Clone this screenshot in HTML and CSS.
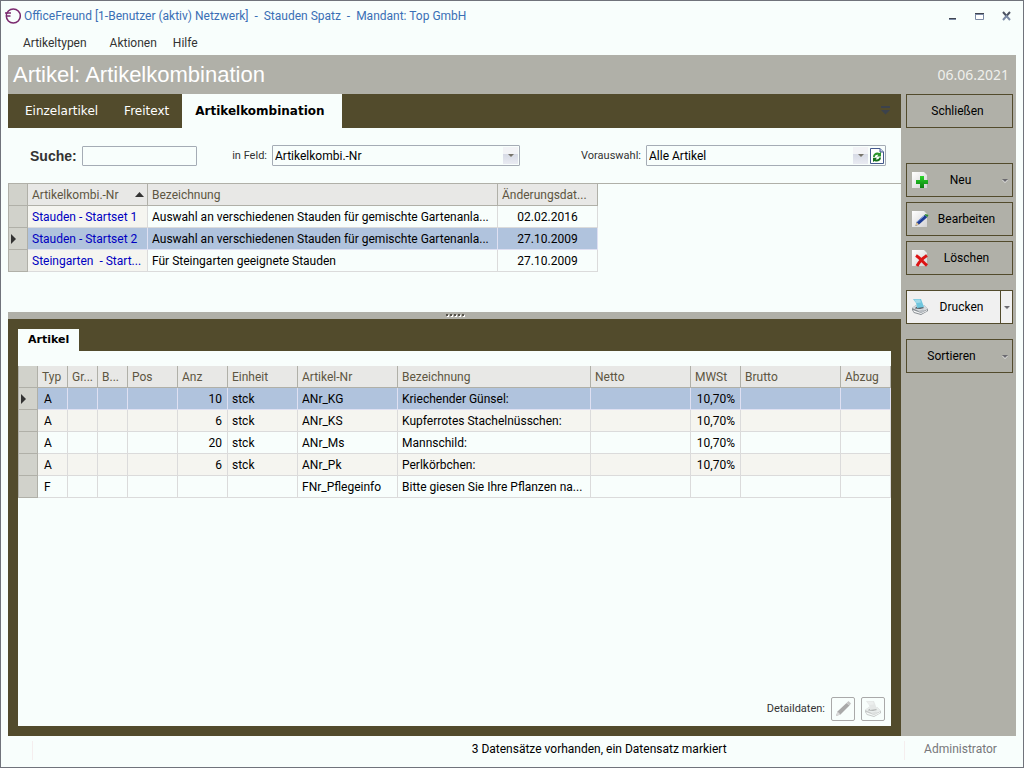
FILE: index.html
```html
<!DOCTYPE html>
<html lang="de">
<head>
<meta charset="utf-8">
<title>OfficeFreund</title>
<link rel="stylesheet" href="styles.css">
</head>
<body>
<svg class="defs" width="0" height="0" aria-hidden="true">
  <defs>
    <linearGradient id="page" x1="0" y1="0" x2="1" y2="1"><stop offset="0" stop-color="#fff"/><stop offset="1" stop-color="#d3d3d3"/></linearGradient>
    <linearGradient id="green" x1="0" y1="0" x2="0" y2="1"><stop offset="0" stop-color="#2bd52b"/><stop offset="1" stop-color="#0a8010"/></linearGradient>
    <symbol id="printer" viewBox="0 0 18 18">
      <path d="M1 10 5 7l8 0 4 4v2l-7 4-7-2-2-3z" fill="#858b90"/>
      <path d="M1 10 5 7l8 0 4 4-7 3z" fill="#d6dade"/>
      <path d="M5 9 11 8 13 10 9 11 4 10.500z" fill="#565c62"/>
      <path d="M2 12 10 15 16 12v1l-6 3-7-2z" fill="#f4f5f6"/>
      <path d="M7 13 12 11.500 14 13 10 15z" fill="#b9bec3"/>
      <path class="sheet" d="M2 1h8l3 8-7 1-1-5z"/>
      <path d="M3 1.500h6l1 3-4.500.5z" fill="#fff" opacity=".35"/>
    </symbol>
  </defs>
</svg>
<div class="window">
  <header class="titlebar">
    <svg class="logo" width="16" height="16" viewBox="0 0 16 16" fill="none" stroke="#7b2a6f" stroke-width="1.5"><circle cx="8.300" cy="8" r="7"/><path d="M0 5h6M1 8h4.500"/></svg>
    <span class="title">OfficeFreund [1-Benutzer (aktiv) Netzwerk]&nbsp; -&nbsp; Stauden Spatz&nbsp; -&nbsp; Mandant: Top GmbH</span>
    <div class="controls">
      <button aria-label="Minimieren"><svg width="10" height="10" viewBox="0 0 10 10"><path d="M1 7h7v1H1z" fill="#3f4450"/><path d="M1 8h7v1H1z" fill="#7b8aa5"/></svg></button>
      <button aria-label="Maximieren"><svg width="10" height="10" viewBox="0 0 10 10"><path d="M.5 2.500h8v6h-8z" fill="#fff" stroke="#7b8aa5"/><path d="M0 2h9v1H0z" fill="#3f4450"/><path d="M0 3h9v1H0z" fill="#7b8aa5"/></svg></button>
      <button aria-label="Schließen"><svg width="10" height="10" viewBox="0 0 10 10" fill="none" stroke-width="2"><path d="M1 1 4.500 5 8 1" stroke="#4b5261"/><path d="M1 9 4.500 5 8 9" stroke="#7b8aa5"/></svg></button>
    </div>
  </header>
  <nav class="menubar"><button>Artikeltypen</button><button>Aktionen</button><button>Hilfe</button></nav>
  <div class="frame">
    <div class="heading"><h1>Artikel: Artikelkombination</h1><time datetime="2021-06-06">06.06.2021</time></div>
    <div class="body">
      <main class="main">
        <div class="tabs">
          <button>Einzelartikel</button><button>Freitext</button><button class="active">Artikelkombination</button>
          <svg class="more" width="10" height="10" viewBox="0 0 10 10" fill="#3c424c"><path d="M0 0h9v2H0zM0 4h9L4.500 8.500z"/></svg>
        </div>
        <section class="upper">
          <form class="search">
            <label class="suche" for="q">Suche:</label><input id="q" type="text">
            <label class="small feld" for="feld">in Feld:</label>
            <span class="combo combo-feld"><select id="feld"><option>Artikelkombi.-Nr</option></select><i class="drop"></i></span>
            <label class="small wahl" for="wahl">Vorauswahl:</label>
            <span class="combo combo-wahl"><select id="wahl"><option>Alle Artikel</option></select><i class="drop"></i>
              <button type="button" class="refresh" aria-label="Aktualisieren"><svg width="14" height="16" viewBox="0 0 14 16"><path d="M.5.5h9.500l3.500 3.500v11.500H.5z" fill="#fff" stroke="#44598c"/><path d="M10 .5v3.500h3.500" fill="#c5d0e5" stroke="#44598c"/><path d="M3 9C3 5 7 3.500 9.500 5L11 4v4.500H7L8.300 7C6.500 6.500 5 7.500 4.800 9z" fill="#2c952c"/><path d="M11 9.500C11 13 7 14.500 4.500 13L3 14V9.700h4L5.700 11.200C7.500 12 9 11 9.200 9.500z" fill="#15701a"/></svg></button>
            </span>
          </form>
          <div class="listbox">
            <table class="grid list">
              <colgroup><col class="w20"><col class="w120"><col class="w350"><col class="w100"></colgroup>
              <thead><tr><th class="mark"></th><th><span class="sorted">Artikelkombi.-Nr<svg width="9" height="5" viewBox="0 0 9 5"><path d="M0 5 4.500 0 9 5z" fill="#333"/></svg></span></th><th>Bezeichnung</th><th>Änderungsdat...</th></tr></thead>
              <tbody>
                <tr><th class="mark"></th><td class="key">Stauden - Startset 1</td><td>Auswahl an verschiedenen Stauden für gemischte Gartenanla...</td><td class="center">02.02.2016</td></tr>
                <tr class="selected"><th class="mark"><i class="pointer"></i></th><td class="key">Stauden - Startset 2</td><td>Auswahl an verschiedenen Stauden für gemischte Gartenanla...</td><td class="center">27.10.2009</td></tr>
                <tr><th class="mark"></th><td class="key">Steingarten&nbsp; - Start...</td><td>Für Steingarten geeignete Stauden</td><td class="center">27.10.2009</td></tr>
              </tbody>
            </table>
          </div>
        </section>
        <div class="splitter"><i></i><i></i><i></i><i></i><i></i></div>
        <section class="lower">
          <div class="subtabs"><button>Artikel</button></div>
          <div class="panel">
            <table class="grid detail">
              <colgroup><col class="w20"><col class="w30"><col class="w30"><col class="w30"><col class="w50"><col class="w50"><col class="w70"><col class="w100"><col><col class="w100"><col class="w50"><col class="w100"><col class="w50"></colgroup>
              <thead><tr><th class="mark"></th><th>Typ</th><th>Gr...</th><th>B...</th><th>Pos</th><th>Anz</th><th>Einheit</th><th>Artikel-Nr</th><th>Bezeichnung</th><th>Netto</th><th>MWSt</th><th>Brutto</th><th>Abzug</th></tr></thead>
              <tbody>
                <tr class="selected"><th class="mark"><i class="pointer"></i></th><td class="typ">A</td><td></td><td></td><td></td><td class="num">10</td><td>stck</td><td>ANr_KG</td><td>Kriechender Günsel:</td><td></td><td class="num">10,70%</td><td></td><td></td></tr>
                <tr class="alt"><th class="mark"></th><td class="typ">A</td><td></td><td></td><td></td><td class="num">6</td><td>stck</td><td>ANr_KS</td><td>Kupferrotes Stachelnüsschen:</td><td></td><td class="num">10,70%</td><td></td><td></td></tr>
                <tr><th class="mark"></th><td class="typ">A</td><td></td><td></td><td></td><td class="num">20</td><td>stck</td><td>ANr_Ms</td><td>Mannschild:</td><td></td><td class="num">10,70%</td><td></td><td></td></tr>
                <tr class="alt"><th class="mark"></th><td class="typ">A</td><td></td><td></td><td></td><td class="num">6</td><td>stck</td><td>ANr_Pk</td><td>Perlkörbchen:</td><td></td><td class="num">10,70%</td><td></td><td></td></tr>
                <tr><th class="mark"></th><td class="typ">F</td><td></td><td></td><td></td><td></td><td></td><td>FNr_Pflegeinfo</td><td>Bitte giesen Sie Ihre Pflanzen na...</td><td></td><td></td><td></td><td></td></tr>
              </tbody>
            </table>
            <div class="detailbar">
              <span class="small">Detaildaten:</span>
              <button aria-label="Bearbeiten"><svg width="18" height="18" viewBox="0 0 18 18"><path d="M2 16 3.500 11.500 12.500 3l3 2.500-9 9z" fill="#a9a9a9"/><path d="m12.500 3 2-2 2.500 2.500-1.500 2z" fill="#c4c4c4"/><path d="m2 16 1.500-4.500 3 3z" fill="#d8d8d8"/></svg></button>
              <button aria-label="Drucken"><svg class="gray" width="18" height="18"><use href="#printer"/></svg></button>
            </div>
          </div>
        </section>
      </main>
      <aside class="actions">
        <button class="act close"><span>Schließen</span></button>
        <div class="group">
          <button class="act menu"><svg width="18" height="18" viewBox="0 0 18 18"><path d="M1 1h12l3 3v13H1z" fill="url(#page)"/><path d="M9 5h4v4h4v4h-4v4H9v-4H5V9h4z" fill="url(#green)"/></svg><span>Neu</span><i class="arrow"></i></button>
          <button class="act"><svg width="18" height="18" viewBox="0 0 18 18"><path d="M1 1h12l3 3v13H1z" fill="url(#page)"/><path d="m4.500 16 1-4 8-7 3 2-8.500 7.500z" fill="#1d3c96"/><path d="m6 12 7-6" stroke="#89a4df" stroke-width="1"/><path d="m4.500 16 1-4 2.500 2.500z" fill="#e2c490"/><path d="m13.500 5 1-1 3 1-1 2z" fill="#2e8c32"/></svg><span>Bearbeiten</span></button>
          <button class="act"><svg width="18" height="18" viewBox="0 0 18 18"><path d="M1 1h12l3 3v13H1z" fill="url(#page)"/><path d="M5 6.500C9 9 12 13 16 16.500M16 6.500C12 9 8 13 6 17" fill="none" stroke="#dc1414" stroke-width="3"/></svg><span>Löschen</span></button>
        </div>
        <div class="act split"><button><svg class="color" width="18" height="18"><use href="#printer"/></svg><span>Drucken</span></button><button class="side" aria-label="Druckoptionen"><i class="arrow"></i></button></div>
        <button class="act menu sort"><span>Sortieren</span><i class="arrow"></i></button>
      </aside>
    </div>
  </div>
  <footer class="status"><span class="cell"></span><span class="message">3 Datensätze vorhanden, ein Datensatz markiert</span><span class="user">Administrator</span></footer>
</div>
</body>
</html>
```
FILE: styles.css
```css
* { box-sizing: border-box; }
body { margin: 0; font: 12px/16px Roboto, "Noto Sans", sans-serif; color: #000; background: #f8fefc; }
button, input, select { font: inherit; color: inherit; margin: 0; padding: 0; border: 0; border-radius: 0; background: none; }
svg { display: block; flex: none; }
.defs { position: absolute; }
.window { min-height: 100vh; display: flex; flex-direction: column; border: 1px solid #70737b; padding: 0 7px; }
.titlebar { display: flex; align-items: center; height: 30px; margin-left: -3px; gap: 3px; color: #3a6fb5; }
.title { flex: 1; }
.controls { display: flex; gap: 17px; padding-right: 4px; }
.menubar { display: flex; align-items: center; height: 24px; padding-left: 15px; gap: 23px; color: #333; }
.menubar button:last-child { margin-left: -7px; }
.frame { flex: 1; display: flex; flex-direction: column; background: #b0b0a8; }
.heading { display: flex; align-items: center; justify-content: space-between; height: 39px; padding: 0 7px 0 5px; color: #fff; }
.heading h1 { margin: 0; font: 22px/24px "Liberation Sans", Arial, sans-serif; }
.heading time { font: 14px/16px "Noto Sans", sans-serif; color: #efefec; }
.body { flex: 1; display: flex; }
.main { flex: 1; min-width: 0; display: flex; flex-direction: column; }
.tabs { display: flex; align-items: stretch; height: 34px; padding-left: 4px; background: #524b2c; color: #fff; font: 12px/16px "DejaVu Sans", sans-serif; }
.tabs button { padding: 0 13px; }
.tabs .active { padding: 0 17px 0 13px; background: #f8fefc; color: #000; font-weight: bold; }
.more { margin: 12px 10px 0 auto; }
.upper { height: 184px; background: #f8fefc; }
.search { display: flex; align-items: center; height: 55px; padding: 0 15px 0 22px; }
.suche { width: 52px; font: bold 14px/16px "Liberation Sans", Arial, sans-serif; color: #333; }
.search input { width: 115px; height: 20px; border: 1px solid #a5acb5; border-radius: 1px; background: #f8fefc; }
.small { font: 11px/16px Roboto, sans-serif; color: #333; }
.feld { width: 75px; padding-right: 5px; text-align: right; }
.wahl { margin-left: auto; padding-right: 5px; }
.combo { display: flex; align-items: center; height: 21px; padding: 1px; border: 1px solid #a5acb5; border-radius: 1px; background: #f8fefc; }
.combo select { flex: 1; min-width: 0; height: 17px; padding-left: 1px; appearance: none; }
.combo-feld { width: 248px; }
.combo-wahl { width: 240px; }
.drop { display: flex; justify-content: center; width: 15px; height: 17px; padding-top: 7px; background: linear-gradient(#f2f3f6 40%, #d6dae5 41%, #e9ebf2); pointer-events: none; }
.drop::after, .arrow { content: ""; height: 3px; border: 3px solid transparent; border-top-color: #77746a; border-bottom: 0; }
.arrow { border-top-color: #6b6a70; filter: drop-shadow(0 1px #e4e4e4); }
.refresh { margin-left: 2px; }
.listbox { border-top: 1px solid #b0b0a8; }
.grid { border-collapse: separate; border-spacing: 0; table-layout: fixed; }
.list { width: 590px; }
.detail { width: 100%; }
.w20 { width: 20px; } .w30 { width: 30px; } .w50 { width: 50px; } .w70 { width: 70px; } .w100 { width: 100px; } .w120 { width: 120px; } .w350 { width: 350px; }
.grid th, .grid td { height: 22px; padding: 0 4px; text-align: left; font-weight: normal; white-space: nowrap; overflow: hidden; border: solid #dbdbdb; border-width: 0 1px 1px 0; }
.grid thead th { background: #e8e8e6; color: #5d5642; border-color: #b0b0a8; }
.grid .mark, .grid thead .mark { padding: 0; background: #d1d2cb; border-color: #b0b0a8; border-left-width: 1px; }
.grid .key { background: #f5f5f0; color: #0000c0; }
.grid .alt td { background: #f5f5f0; }
.grid .selected td { background: #b0c3dd; border-color: #dfe0f2; }
.grid .center { text-align: center; }
.grid .num { text-align: right; padding-right: 5px; }
.grid .typ { padding-left: 6px; }
.sorted { display: flex; justify-content: space-between; align-items: center; margin-right: -1px; }
.pointer { display: block; width: 5px; margin-left: 2px; border: 5px solid transparent; border-left-color: #333; border-right: 0; }
.splitter { display: flex; justify-content: center; gap: 2px; height: 7px; padding-top: 2px; background: #b0b0a8; }
.splitter i { width: 2px; height: 2px; background: #55534b; box-shadow: 1px 1px #fff; }
.lower { flex: 1; display: flex; flex-direction: column; padding: 10px; background: #524b2c; }
.subtabs { display: flex; }
.subtabs button { height: 22px; padding: 0 10px; background: #f8fefc; font: bold 11px/16px "DejaVu Sans", sans-serif; }
.panel { flex: 1; display: flex; flex-direction: column; padding-top: 15px; background: #f8fefc; }
.detailbar { display: flex; align-items: center; justify-content: flex-end; gap: 6px; margin-top: auto; padding: 0 6px 5px 0; }
.detailbar button { display: flex; align-items: center; justify-content: center; width: 24px; height: 24px; border: 1px solid #a9a9a9; border-radius: 2px; }
.gray { opacity: .45; filter: grayscale(1); fill: #ccc; }
.color { fill: #6fc6de; }
.actions { width: 115px; padding: 0 3px 0 5px; display: flex; flex-direction: column; }
.act { display: flex; align-items: center; width: 100%; height: 34px; border: 1px solid #524b2c; padding: 0 4px; }
.act span { flex: 1; padding-right: 4px; text-align: center; }
.act.menu span { padding-right: 10px; }
.group { display: flex; flex-direction: column; gap: 5px; margin: 35px 0 15px; }
.act.close { padding: 0; }
.act.split { padding: 0; background: #f0f0f0; }
.split button { display: flex; align-items: center; align-self: stretch; flex: 1; padding-left: 4px; }
.split span { padding-right: 6px; }
.split .side { flex: none; width: 12px; padding: 0; justify-content: center; border-left: 1px solid #524b2c; }
.sort { margin-top: 15px; }
.status { display: flex; align-items: stretch; height: 31px; padding: 5px 0 7px; line-height: 17px; }
.cell { flex: 3; margin-left: 24px; border-left: 1px solid #f5eeee; }
.message { flex: 7; text-align: center; }
.user { width: 112px; text-align: center; color: #77777a; border-left: 1px solid #f5eeee; }
```
